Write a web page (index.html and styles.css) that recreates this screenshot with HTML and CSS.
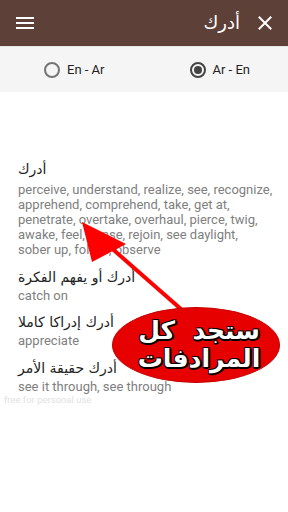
FILE: index.html
```html
<!DOCTYPE html>
<html lang="ar">
<head>
<meta charset="utf-8">
<link rel="stylesheet" href="styles.css">
</head>
<body>
<div class="app">
  <header class="topbar">
    <div class="menu"><span></span><span></span><span></span></div>
    <div class="title-wrap">
      <span class="title">أدرك</span>
      <svg class="close" width="14" height="14" viewBox="0 0 14 14"><path d="M1.5 1.5 L12.5 12.5 M12.5 1.5 L1.5 12.5" stroke="#fff" stroke-width="2" stroke-linecap="square"/></svg>
    </div>
  </header>
  <div class="modes">
    <label class="mode"><span class="radio"></span><span>En - Ar</span></label>
    <label class="mode"><span class="radio on"></span><span>Ar - En</span></label>
  </div>
  <main class="results">
    <div class="entry first">
      <div class="ar">أدرك</div>
      <div class="en">perceive, understand, realize, see, recognize,<br>apprehend, comprehend, take, get at,<br>penetrate, overtake, overhaul, pierce, twig,<br>awake, feel, sense, rejoin, see daylight,<br>sober up, follow, observe</div>
    </div>
    <div class="entry">
      <div class="ar">أدرك أو يفهم الفكرة</div>
      <div class="en">catch on</div>
    </div>
    <div class="entry">
      <div class="ar">أدرك إدراكا كاملا</div>
      <div class="en">appreciate</div>
    </div>
    <div class="entry">
      <div class="ar">أدرك حقيقة الأمر</div>
      <div class="en">see it through, see through</div>
    </div>
    <div class="watermark">free for personal use</div>
  </main>
  <svg class="arrow" width="288" height="512" viewBox="0 0 288 512">
    <line x1="182" y1="310" x2="100" y2="238" stroke="#f00" stroke-width="4"/>
    <polygon points="82,222 126,244 92,262" fill="#f00"/>
  </svg>
  <div class="bubble">
    <span class="l1">ستجد&nbsp; كل</span>
    <span class="l2">المرادفات</span>
  </div>
</div>
</body>
</html>
```
FILE: styles.css
```css
* { box-sizing: border-box; }
html, body { margin: 0; padding: 0; }
body {
  width: 288px;
  height: 512px;
  background: #fff;
  font-family: Roboto, "DejaVu Sans", sans-serif;
  overflow: hidden;
}
.app { position: relative; width: 288px; height: 512px; }
.topbar {
  height: 46px;
  background: #5d4037;
  display: flex;
  align-items: center;
  justify-content: space-between;
  padding: 0 16px 0 16px;
}
.menu { display: flex; flex-direction: column; gap: 3px; width: 18px; }
.menu span { display: block; height: 2px; background: #fff; }
.title-wrap { display: flex; align-items: center; gap: 18px; }
.title { color: #fff; font-size: 18px; font-family: "DejaVu Sans", sans-serif; line-height: 24px; }
.close { display: block; }
.modes {
  height: 46px;
  background: #f5f5f5;
  display: flex;
  align-items: center;
  padding-left: 44px;
  gap: 85px;
  border-top: 1px solid #e6e6e6;
}
.mode { display: flex; align-items: center; gap: 7px; font-size: 13px; color: #222; }
.radio {
  width: 16px; height: 16px;
  border: 2px solid #757575;
  border-radius: 50%;
  display: flex; align-items: center; justify-content: center;
}
.radio.on { border-color: #444; }
.radio.on::after { content: ""; width: 8px; height: 8px; border-radius: 50%; background: #444; }
.results { padding: 65px 8px 0 18px; }
.entry { margin-bottom: 8.5px; }
.ar {
  direction: ltr;
  text-align: left;
  unicode-bidi: plaintext;
  font-family: "DejaVu Sans", sans-serif;
  font-size: 14px;
  line-height: 22px;
  color: #212121;
}
.first .ar { line-height: 25px; }
.en { font-size: 13px; line-height: 15px; color: #808080; white-space: nowrap; }
.watermark { margin-left: -14px; font-size: 9.5px; line-height: 12px; color: #e2e2e2; margin-top: -8px; }
.arrow { position: absolute; left: 0; top: 0; pointer-events: none; }
.bubble {
  position: absolute;
  left: 112px; top: 307px;
  width: 168px; height: 76px;
  border-radius: 50%;
  background: #e60000;
  border: 1px solid #c00000;
  display: flex; flex-direction: column; align-items: center; justify-content: center;
  color: #fff;
  font-family: "DejaVu Sans", sans-serif;
  font-weight: bold;
  font-size: 25px;
  line-height: 28px;
  padding-left: 6px;
  text-shadow: -1px -1px 0 #000, 1px -1px 0 #000, -1px 1px 0 #000, 1px 1px 0 #000, 0 2px 0 #000, 2px 1px 0 #000;
}
.l1 { direction: rtl; }
.l2 { direction: rtl; }
```
